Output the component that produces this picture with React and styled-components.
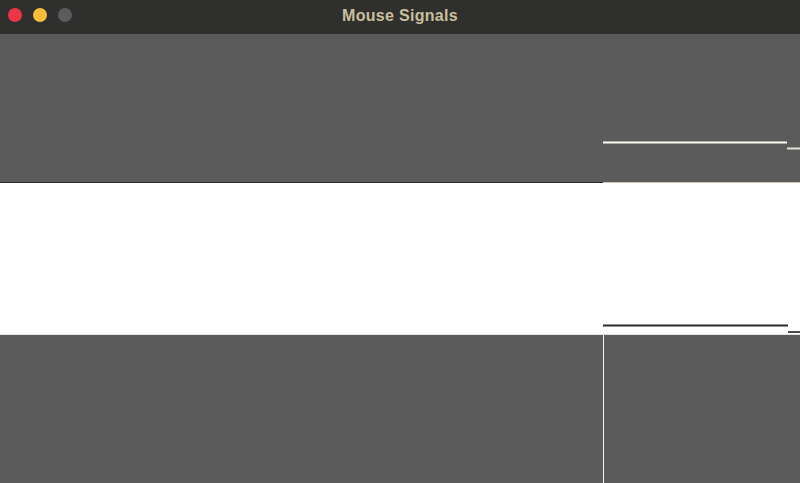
import React from 'react';
import styled, { createGlobalStyle } from 'styled-components';

const GlobalStyle = createGlobalStyle`
  html, body {
    margin: 0;
    padding: 0;
    background: #5b5b5b;
    overflow: hidden;
  }
`;

const Window = styled.div`
  width: 800px;
  height: 483px;
  display: flex;
  flex-direction: column;
  font-family: "Liberation Sans", Arial, sans-serif;
`;

// 타이틀 바
const TitleBar = styled.div`
  position: relative;
  height: 34px;
  flex: 0 0 34px;
  display: flex;
  align-items: center;
  justify-content: center;
  background: #2f2f2d;
`;

const Lights = styled.div`
  position: absolute;
  left: 8px;
  top: 8px;
  display: flex;
  gap: 11px;
`;

const Light = styled.span`
  width: 14px;
  height: 14px;
  border-radius: 50%;
  background: ${(p) => p.color};
`;

const Title = styled.div`
  color: #c8bf9c;
  font-size: 16px;
  font-weight: bold;
  letter-spacing: 0.3px;
  margin-top: -2px;
`;

// 신호 밴드
const Band = styled.div`
  display: grid;
  grid-template-columns: 603px 1fr;
  height: ${(p) => p.h}px;
  flex: 0 0 ${(p) => p.h}px;
  background: ${(p) => (p.light ? '#fefefe' : '#5b5b5b')};
`;

const Cell = styled.div`
  box-sizing: border-box;
  border-bottom: ${(p) => p.bottom || 'none'};
  border-left: ${(p) => p.left || 'none'};
`;

const Trace = styled.svg`
  display: block;
  width: 100%;
  height: 100%;
`;

const Wave = ({ h, y1, y2, split, color }) => (
  <Trace viewBox={`0 0 197 ${h}`} preserveAspectRatio="none">
    <line x1="0" y1={y1} x2={split} y2={y1} stroke={color} strokeWidth="2" />
    <line x1={split} y1={y2} x2="197" y2={y2} stroke={color} strokeWidth="2" opacity="0.85" />
  </Trace>
);

export default function App() {
  return (
    <Window>
      <GlobalStyle />
      <TitleBar>
        <Lights>
          <Light color="#ec3648" />
          <Light color="#f8be3a" />
          <Light color="#5b5b5b" />
        </Lights>
        <Title>Mouse Signals</Title>
      </TitleBar>
      <Band h={149}>
        <Cell bottom="1px solid #2c2c2c" />
        <Cell bottom="1px solid #cfc6a6">
          <Wave h={148} y1={108.5} y2={114.5} split={184} color="#fdfbf0" />
        </Cell>
      </Band>
      <Band h={152} light>
        <Cell bottom="1px solid #e4e4e4" />
        <Cell bottom="1px solid #e4e4e4">
          <Wave h={151} y1={142.5} y2={149} split={185} color="#2a2a2a" />
        </Cell>
      </Band>
      <Band h={148}>
        <Cell />
        <Cell left="1px solid #f4f2e6" />
      </Band>
    </Window>
  );
}
